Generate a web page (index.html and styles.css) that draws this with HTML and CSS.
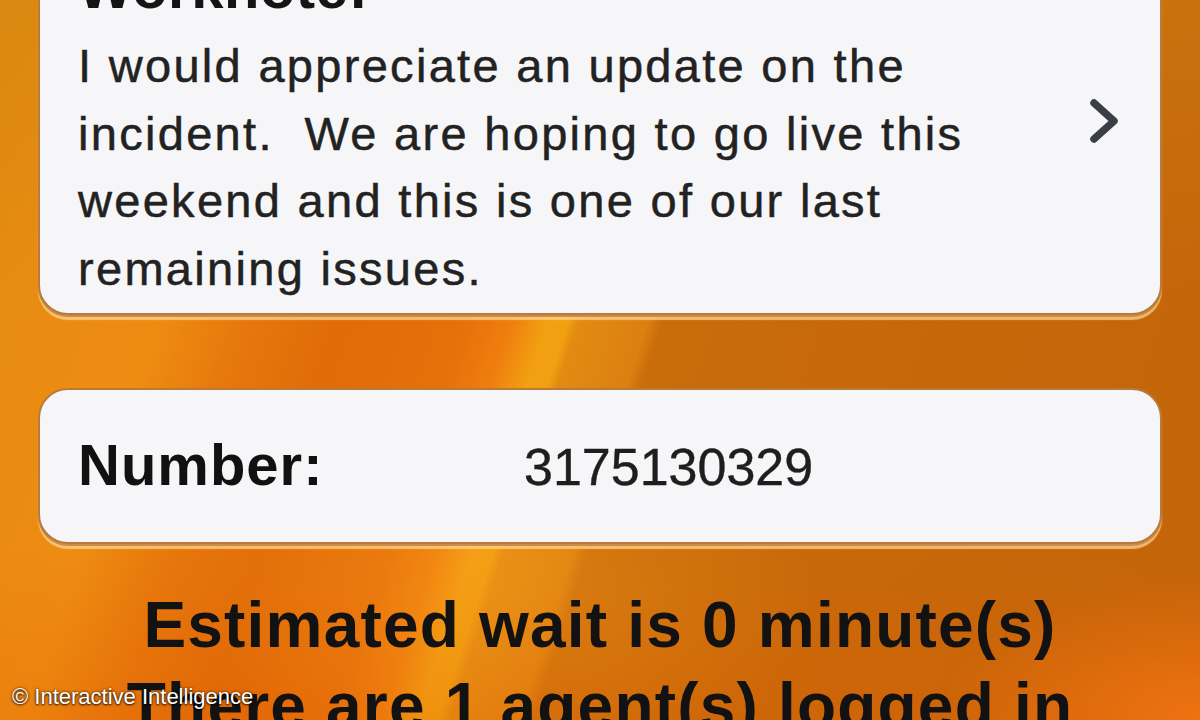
FILE: index.html
```html
<!DOCTYPE html>
<html lang="en">
<head>
<meta charset="utf-8">
<title>Worknote</title>
<link rel="stylesheet" href="styles.css">
</head>
<body>
<div class="screen">
  <div class="card note">
    <div class="note-body">
      <div class="note-title">Worknote:</div>
      <div class="note-text">I would appreciate an update on the incident.&nbsp; We are hoping to go live this weekend and this is one of our last remaining issues.</div>
    </div>
    <svg class="chevron" width="40" height="50" viewBox="0 0 40 50">
      <path d="M8 6 L28 24 L8 42" fill="none" stroke="#3a3e47" stroke-width="7.5" stroke-linecap="round" stroke-linejoin="round"/>
    </svg>
  </div>
  <div class="card number">
    <div class="num-label">Number:</div>
    <div class="num-value">3175130329</div>
  </div>
  <div class="status">
    <div class="status-line">Estimated wait is 0 minute(s)</div>
    <div class="status-line">There are 1 agent(s) logged in</div>
  </div>
</div>
<div class="credit">© Interactive Intelligence</div>
</body>
</html>
```

FILE: styles.css
```css
html, body {
  margin: 0;
  padding: 0;
}
body {
  width: 1200px;
  height: 720px;
  overflow: hidden;
  position: relative;
  font-family: "Liberation Sans", Arial, sans-serif;
  background:
    radial-gradient(ellipse 260px 140px at 1200px 720px, rgba(255,120,20,0.7), rgba(255,120,20,0) 100%),
    radial-gradient(ellipse 320px 180px at 500px 590px, rgba(250,160,30,0.35), rgba(250,160,30,0) 100%),
    linear-gradient(180deg, rgba(205,135,20,0.35) 0%, rgba(205,135,20,0) 40%, rgba(0,0,0,0) 75%, rgba(230,95,0,0.25) 100%),
    linear-gradient(108deg,
      #e0880f 0px, #e98c12 120px, #ee8c12 250px, #e7780c 330px,
      #e06c08 420px, #e6700a 540px, #ef7e0e 585px,
      #f2a012 620px, #f0a010 640px, #e28a12 650px,
      #dc8010 715px, #c96c0a 730px, #c6680a 1000px, #c4640a 1363px);
}
.screen {
  padding: 0 38px;
}
.card {
  background: #f6f6f8;
  border: 2px solid #b97a3c;
  border-radius: 30px;
  box-shadow: 0 2px 0 #c98c4c, 0 5px 1px rgba(255, 214, 140, 0.75);
}
.note {
  margin-top: -80px;
  padding: 21px 34px 11px 38px;
  display: flex;
  align-items: center;
  justify-content: space-between;
}
.note-title {
  font-weight: bold;
  font-size: 58px;
  line-height: 89px;
  letter-spacing: 0.5px;
  color: #141414;
}
.note-text {
  width: 900px;
  font-size: 47px;
  line-height: 67.5px;
  letter-spacing: 2.3px;
  color: #222222;
  -webkit-text-stroke: 0.5px #222222;
}
.chevron {
  display: block;
  margin-bottom: 2px;
}
.number {
  margin-top: 73px;
  height: 156px;
  box-sizing: border-box;
  padding: 0 38px;
  display: grid;
  grid-template-columns: 446px 1fr;
  align-content: center;
  align-items: baseline;
}
.num-label {
  font-weight: bold;
  font-size: 58px;
  line-height: 66px;
  letter-spacing: 1px;
  color: #111;
}
.num-value {
  font-size: 52px;
  line-height: 66px;
  color: #1e1e1e;
  -webkit-text-stroke: 0.4px #1e1e1e;
}
.status {
  margin-top: 41px;
  text-align: center;
}
.status-line {
  font-weight: bold;
  font-size: 64px;
  line-height: 81px;
  letter-spacing: 1.2px;
  color: #121212;
  white-space: nowrap;
}
.credit {
  position: absolute;
  left: 12px;
  top: 683px;
  font-size: 22px;
  line-height: 28px;
  color: #ffffff;
  text-shadow: 0 0 3px rgba(0,0,0,0.8), 0 1px 2px rgba(0,0,0,0.7);
}
```
